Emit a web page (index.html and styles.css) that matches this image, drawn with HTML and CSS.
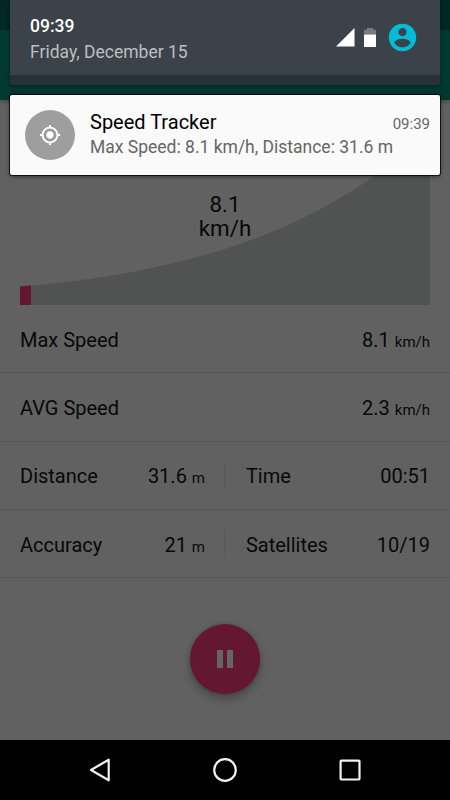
FILE: index.html
```html
<!DOCTYPE html>
<html lang="en">
<head>
<meta charset="utf-8">
<title>Speed Tracker</title>
<link rel="stylesheet" href="styles.css">
</head>
<body>
<div class="phone">
  <main class="app">
    <div class="status"></div>
    <div class="toolbar"></div>
    <section class="chart">
      <svg width="410" height="205" viewBox="20 100 410 205">
        <path class="area" d="M20 286.5C90 281 158 270 225 249C285 230 335 204 374 176Q405 154 430 131V305H20Z"/>
        <path class="progress" d="M20 286.5L31 285.5V305H20Z"/>
      </svg>
      <div class="current">8.1<br>km/h</div>
    </section>
    <section class="stats">
      <div class="row"><div class="cell"><span>Max Speed</span><span>8.1 <small>km/h</small></span></div></div>
      <div class="row"><div class="cell"><span>AVG Speed</span><span>2.3 <small>km/h</small></span></div></div>
      <div class="row split"><div class="cell"><span>Distance</span><span>31.6 <small>m</small></span></div><i class="divider"></i><div class="cell"><span>Time</span><span>00:51</span></div></div>
      <div class="row split"><div class="cell"><span>Accuracy</span><span>21 <small>m</small></span></div><i class="divider"></i><div class="cell"><span>Satellites</span><span>10/19</span></div></div>
    </section>
    <div class="controls"><div class="pause"><i></i><i></i></div></div>
  </main>
  <nav class="nav">
    <svg viewBox="0 0 30 30"><path d="M6 15L23.7 4.7V25.3Z"/></svg>
    <svg viewBox="0 0 30 30"><circle cx="15" cy="15" r="10.8"/></svg>
    <svg viewBox="0 0 30 30"><rect x="5.6" y="5.6" width="18.9" height="18.9" rx=".7"/></svg>
  </nav>
  <div class="shade">
    <header class="panel">
      <div class="clock"><b>09:39</b><span>Friday, December 15</span></div>
      <svg class="signal" width="19" height="19" viewBox="0 0 19 19"><path d="M18.5 0V18.5H0Z" fill="#fff"/></svg>
      <svg class="battery" width="12" height="19" viewBox="0 0 12 19"><path d="M0 1.8H3V0H9V1.8H12V6.5H0Z" fill="#787c7e"/><path d="M0 6.5H12V19H0Z" fill="#fff"/></svg>
      <svg class="user" width="33" height="33" viewBox="0 0 24 24"><path fill="#00bcd7" d="M12 2C6.48 2 2 6.48 2 12s4.48 10 10 10 10-4.48 10-10S17.52 2 12 2zm0 3c1.66 0 3 1.34 3 3s-1.34 3-3 3-3-1.34-3-3 1.34-3 3-3zm0 14.2c-2.5 0-4.71-1.28-6-3.22.03-1.99 4-3.08 6-3.08 1.99 0 5.97 1.09 6 3.08-1.29 1.94-3.5 3.22-6 3.22z"/></svg>
    </header>
    <article class="notice">
      <div class="avatar"><svg width="22" height="22" viewBox="0 0 24 24"><path fill="#fff" d="M12 8c-2.21 0-4 1.79-4 4s1.79 4 4 4 4-1.79 4-4-1.79-4-4-4zm8.94 3c-.46-4.17-3.77-7.48-7.94-7.94V1h-2v2.06C6.83 3.52 3.52 6.83 3.06 11H1v2h2.06c.46 4.17 3.77 7.48 7.94 7.94V23h2v-2.06c4.17-.46 7.48-3.77 7.94-7.94H23v-2h-2.06zM12 19c-3.87 0-7-3.13-7-7s3.13-7 7-7 7 3.13 7 7-3.13 7-7 7z"/></svg></div>
      <div class="message">
        <div class="heading"><span>Speed Tracker</span><time>09:39</time></div>
        <div class="detail">Max Speed: 8.1 km/h, Distance: 31.6 m</div>
      </div>
    </article>
  </div>
</div>
</body>
</html>
```
FILE: styles.css
```css
* { box-sizing: border-box; }
body { margin: 0; font-family: Roboto, sans-serif; }
svg { display: block; }
.phone { position: relative; width: 450px; height: 800px; display: flex; flex-direction: column; overflow: hidden; }
.app { flex: 1; background: #616161; color: #080808; }
.status { height: 30px; background: #002722; }
.toolbar { height: 70px; background: #003832; box-shadow: 0 2px 5px rgba(0,0,0,.28); position: relative; }
.chart { position: relative; height: 205px; padding: 0 20px; }
.area { fill: #515352; }
.progress { fill: #641731; }
.current { position: absolute; top: 92px; left: 0; width: 100%; text-align: center; font-size: 22.4px; line-height: 24px; }
.row { display: flex; align-items: center; height: 68.33px; border-bottom: 1px solid #575757; }
.cell { flex: 1; display: flex; justify-content: space-between; align-items: baseline; padding: 2px 20px 0; font-size: 20px; line-height: 24px; }
.cell span { line-height: 24px; }
.cell small { font-size: 15px; line-height: 1; }
.divider { width: 1px; height: 27px; background: #575757; }
.split .cell:first-child { flex: 0 0 224.4px; padding-right: 19.4px; }
.split .cell:last-child { padding-left: 20.5px; }
.controls { display: flex; justify-content: center; padding-top: 46px; }
.pause { width: 70px; height: 70px; border-radius: 50%; background: #641731; display: flex; align-items: center; justify-content: center; gap: 4px; box-shadow: 0 5px 9px rgba(0,0,0,.28), 0 0 4px rgba(0,0,0,.15); }
.pause i { width: 6px; height: 18px; background: #656565; }
.nav { height: 60px; background: #000; display: flex; align-items: center; justify-content: center; gap: 95px; }
.nav svg { width: 30px; height: 30px; fill: none; stroke: #f1f1f1; stroke-width: 2.2; stroke-linejoin: round; }
.shade { position: absolute; inset: 0 10px auto; }
.panel { height: 85px; display: flex; align-items: flex-start; padding: 0 21px 0 20px; border-bottom: 10px solid #273238; border-radius: 0 0 3px 3px; background: #3b4249; box-shadow: 0 1px 4px rgba(0,0,0,.35); }
.clock { flex: 1; padding-top: 14px; color: #bbbfc1; font-size: 17.5px; line-height: 24px; }
.clock b, .clock span { display: block; }
.clock b { color: #fff; font-weight: 500; margin-bottom: 2px; }
.signal { margin: 28px 9px 0 0; }
.battery { margin: 28px 10px 0 0; }
.user { margin-top: 21px; }
.notice { margin-top: 10px; height: 80px; display: flex; padding: 15px 10px 0 15px; border-radius: 2px; background: #fafafa; box-shadow: 0 0 0 1px #000b, 0 1px 4px rgba(0,0,0,.6); }
.avatar { width: 50px; height: 50px; border-radius: 50%; background: #9e9e9e; display: flex; align-items: center; justify-content: center; }
.message { flex: 1; margin-left: 15px; }
.heading { display: flex; justify-content: space-between; align-items: baseline; font-size: 20px; line-height: 24px; color: #000; }
.heading time { font-size: 15px; color: #666; }
.detail { font-size: 17.5px; line-height: 24px; margin-top: -1px; color: #666; }
```
